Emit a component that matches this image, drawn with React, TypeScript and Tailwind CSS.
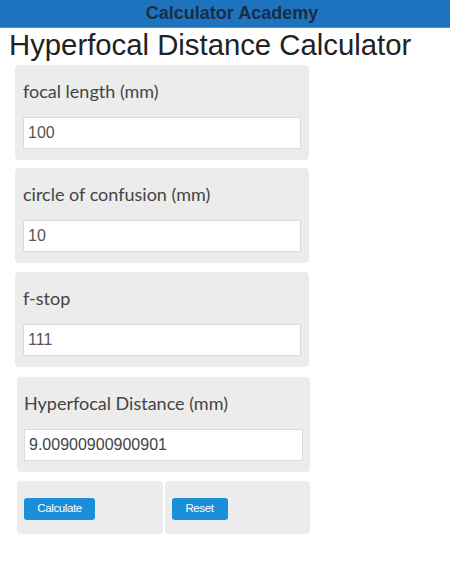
import React from "react";

const fields = [
  { label: "focal length (mm)", value: "100", mt: "mt-[3px]" },
  { label: "circle of confusion (mm)", value: "10", mt: "mt-[8px]" },
  { label: "f-stop", value: "111", mt: "mt-[9px]" },
];

function Field({ label, value, className }: { label: string; value: string; className: string }) {
  return (
    <div className={`rounded-[4px] bg-[#ececec] px-[8px] pt-[14px] pb-[11px] ${className}`}>
      <div className="h-[24px] text-[18px] leading-[24px] text-[#444]" style={{ fontFamily: "Lato, 'Open Sans', sans-serif" }}>
        {label}
      </div>
      <input
        readOnly
        value={value}
        className="mt-[14px] block h-[32px] w-full border border-[#dcdcdc] bg-white px-[4px] text-[16px] text-[#555] outline-none"
        style={{ fontFamily: "'Liberation Sans', Arial, sans-serif" }}
      />
    </div>
  );
}

export default function App() {
  return (
    <div className="min-h-[565px] w-[450px] bg-white" style={{ fontFamily: "'Liberation Sans', Arial, sans-serif" }}>
      <div className="h-[28px] border-b border-[#4f93d1] bg-[#1e73be] pl-[14px] text-center text-[18px] font-bold leading-[27px] text-[#1b2c46]">
        Calculator Academy
      </div>
      <h1 className="pl-[9px] text-[29.3px] leading-[34px] text-[#222]">Hyperfocal Distance Calculator</h1>

      <div className="w-[294px] ml-[15px]">
        {fields.map((f) => (
          <Field key={f.label} label={f.label} value={f.value} className={f.mt} />
        ))}
      </div>

      <div className="ml-[17px] w-[293px]">
        <div className="mt-[10px] rounded-[4px] bg-[#ececec] px-[7px] pt-[14px] pb-[11px]">
          <div className="h-[24px] text-[18px] leading-[24px] text-[#444]" style={{ fontFamily: "Lato, 'Open Sans', sans-serif" }}>
            Hyperfocal Distance (mm)
          </div>
          <input
            readOnly
            value="9.00900900900901"
            className="mt-[14px] block h-[32px] w-full border border-[#dcdcdc] bg-white px-[4px] text-[16px] text-[#444] outline-none"
          />
        </div>

        <div className="mt-[9px] flex h-[53px]">
          <div className="flex-1 rounded-[4px] bg-[#ececec] pl-[7px] pt-[17px]">
            <button className="block h-[22px] w-[71px] rounded-[3px] bg-[#1a8fd9] text-[11.5px] tracking-[-0.4px] text-white">
              Calculate
            </button>
          </div>
          <div className="ml-[2px] flex-1 rounded-[4px] bg-[#ececec] pl-[7px] pt-[17px]">
            <button className="block h-[22px] w-[56px] rounded-[3px] bg-[#1a8fd9] text-[11.5px] tracking-[-0.4px] text-white">
              Reset
            </button>
          </div>
        </div>
      </div>
    </div>
  );
}
